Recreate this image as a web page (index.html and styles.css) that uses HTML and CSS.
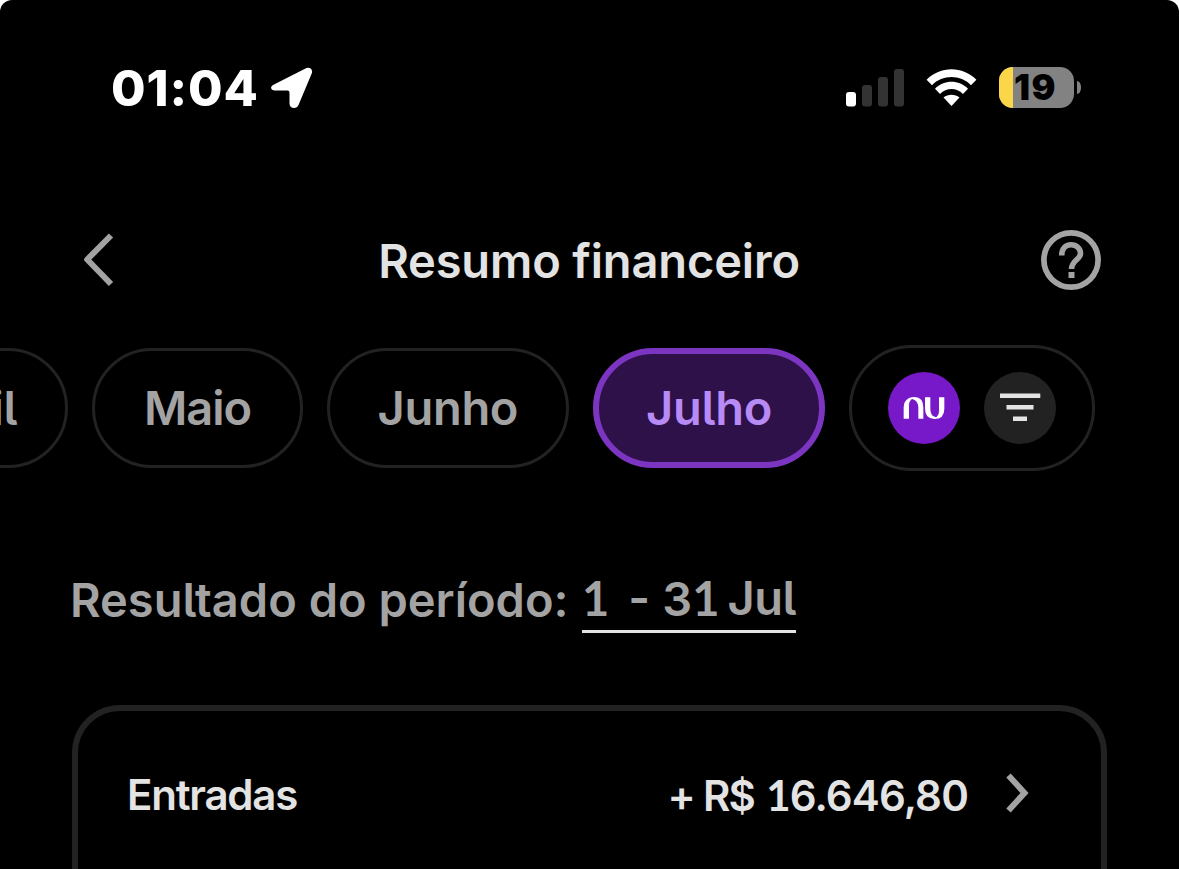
FILE: index.html
```html
<!DOCTYPE html>
<html lang="pt-BR">
<head>
<meta charset="utf-8">
<title>Resumo financeiro</title>
<link rel="stylesheet" href="styles.css">
</head>
<body>
<main class="screen">
  <header class="status">
    <span class="clock">01:04</span>
    <svg class="location" width="42" height="42" viewBox="0 0 42 42"><path d="M3 17.500 34.500 1.500C38-.5 42.500 2 40.700 6.500L27.500 38C26 42.500 18.500 42 18.500 36.500V25.500Q18.500 23.500 16.500 23.500H4C-.5 23.500-1.500 19.500 3 17.500Z" fill="#fff"/></svg>
    <svg class="signal" width="58" height="38" viewBox="0 0 58 38"><rect y="23" width="10" height="14.500" rx="3" fill="#fff"/><g fill="#333"><rect x="16" y="16" width="10" height="21.500" rx="3"/><rect x="32" y="8" width="10" height="29.500" rx="3"/><rect x="48" width="10" height="37.500" rx="3"/></g></svg>
    <svg class="wifi" width="51" height="38" viewBox="0 0 51 38"><g fill="#fff"><path d="M.6 10.800C14-3.300 37-3.300 50.400 10.800L45 16.200C34.500 5.300 16.500 5.300 6 16.200Z"/><path d="M9 19.700C18 10.400 33 10.400 42 19.700L37 25C30.500 18.300 20.500 18.300 14 25Z"/><path d="M17.500 28.500C22 24.800 29 24.800 33.500 28.500L25.500 37Z"/></g></svg>
    <div class="battery"><span class="battery-level"></span><span class="battery-text">19</span></div>
    <span class="nub"></span>
  </header>

  <nav class="nav">
    <svg class="back" width="34" height="56" viewBox="0 0 34 56"><path d="M31 3.500 7.200 27.500 31 52" fill="none" stroke="#a3a3a3" stroke-width="6" stroke-linejoin="round"/></svg>
    <h1 class="title">Resumo financeiro</h1>
    <svg class="help" width="60" height="60" viewBox="0 0 60 60"><g fill="none" stroke="#a3a3a3"><circle cx="30" cy="30" r="27.100" stroke-width="5.700"/><path d="M20.700 25.500C20.700 18.500 24.500 14.800 30 14.800S39.500 18.500 39.500 23.500C39.500 29.500 30.500 30.500 30.500 39" stroke-width="5.600"/></g><path d="M27.500 42h6v6h-6z" fill="#a3a3a3"/></svg>
  </nav>

  <div class="months">
    <button class="chip chip-april">Abril</button>
    <button class="chip chip-may">Maio</button>
    <button class="chip chip-june">Junho</button>
    <button class="chip chip-july">Julho</button>
    <div class="filters">
      <svg width="72" height="72" viewBox="144 111 216 216"><circle cx="252" cy="219" r="108" fill="#7719c8"/><g fill="#fff"><path d="M191 251V217Q191 198 207 189Q215 186 224 186Q250 187 250 218V251H235V216Q234 196 216 192Q207 199 207 214V251Z"/><path d="M255 187H271V222Q271 243 288 247Q297 240 297 224V187H313V222Q313 252 283 252Q255 252 255 220Z"/></g><path d="M207 211Q208 199 217 193M297 226Q296 239 288 246" fill="none" stroke="#7719c8" stroke-width="1.500"/></svg>
      <svg width="72" height="72" viewBox="0 0 72 72"><circle cx="36" cy="36" r="36" fill="#222"/><path d="M16 21.500h40.300v4.500H16zM22.500 33h27v4.500h-27zM29 44.500h14v4.500H29z" fill="#e3e3e3"/></svg>
    </div>
  </div>

  <section class="period">
    <span class="period-label">Resultado do período:</span>
    <span class="range"><span class="one">1</span><span class="dash">-</span><span class="day">3<span class="one">1</span></span><span class="month">Jul</span></span>
  </section>

  <section class="card">
    <span class="entry">Entradas</span>
    <span class="amount"><span class="currency">+ R$</span><span class="value"><span class="one">1</span>6.646,80</span></span>
    <svg class="go" width="24" height="40" viewBox="0 0 24 40"><path d="M2.500 2.500 18.500 20 2.500 37.500" fill="none" stroke="#a3a3a3" stroke-width="6"/></svg>
  </section>
</main>
</body>
</html>
```
FILE: styles.css
```css
* { box-sizing: border-box; }
html { background: #fff; }
body { margin: 0; font-family: Inter, "Liberation Sans", sans-serif; font-weight: 560; font-feature-settings: "cv05"; }
.screen { width: 1179px; height: 869px; overflow: hidden; background: #000; border-radius: 12px 12px 0 0; display: flex; flex-direction: column; white-space: nowrap; }

.status { height: 176px; flex: none; display: flex; align-items: center; padding-left: 111px; }
.clock { width: 160px; color: #fff; font-size: 50px; font-weight: 760; line-height: 60px; letter-spacing: .900px; }
.signal { margin-left: 533px; }
.wifi { margin-left: 22px; }
.battery { width: 75px; height: 41px; margin: -1px 0 0 22px; border-radius: 14px; overflow: hidden; background: #828282; display: flex; align-items: center; }
.battery-level { width: 14px; height: 41px; background: #fad648; }
.battery-text { color: #000; font-size: 35.500px; font-weight: 900; line-height: 41px; letter-spacing: 1.500px; margin-left: 1px; }
.nub { width: 4px; height: 13px; margin: -1px 0 0 3px; border-radius: 0 4px 4px 0 / 0 6px 6px 0; background: #828282; }

.nav { height: 168px; flex: none; display: flex; align-items: center; justify-content: space-between; padding: 0 78px 0 80px; }
.title { margin: 2px 0 0 23px; color: #e3e3e3; font-size: 47px; font-weight: 560; line-height: 60px; letter-spacing: -.150px; }

.months { height: 128px; flex: none; display: flex; align-items: center; gap: 24px; margin-left: -131.700px; }
.chip { height: 120px; flex: none; padding: 0 0 2px; border: 3px solid #222; border-radius: 60px; background: #000; color: #a3a3a3; font: inherit; font-size: 47px; letter-spacing: -.300px; }
.chip-april { width: 200px; padding-right: 48px; text-align: right; }
.chip-may { width: 210.400px; letter-spacing: -1px; }
.chip-june { width: 242.300px; }
.chip-july { width: 232px; border: 6px solid #7b35c1; background: #2e1148; color: #b78af5; }
.filters { width: 246px; height: 126px; flex: none; display: flex; align-items: center; justify-content: center; gap: 24px; border: 3px solid #222; border-radius: 63px; }

.period { display: flex; align-items: flex-start; height: 73px; flex: none; margin: 96px 0 0 70px; color: #a3a3a3; font-size: 47px; line-height: 58px; }
.period-label { width: 512px; padding-top: 3px; }
.range { width: 214px; height: 65px; padding-top: 1px; border-bottom: 3px solid #e3e3e3; display: flex; }
.one { font-family: Lato, sans-serif; font-weight: 700; }
.dash { width: 36px; margin-left: 19px; }
.month { margin-left: 8px; letter-spacing: -.500px; }

.card { width: 1035px; height: 240px; flex: none; display: flex; align-items: flex-start; margin: 64px 0 0 72px; padding: 59px 50px; border: 6px solid #222; border-radius: 48px; color: #e3e3e3; font-size: 42px; line-height: 50px; }
.entry { flex: 1; margin-left: -1px; letter-spacing: -1.200px; }
.currency { margin-right: 12px; letter-spacing: -1.700px; }
.value { letter-spacing: -.850px; }
.go { margin: 3px 21px 0 38px; }
```
